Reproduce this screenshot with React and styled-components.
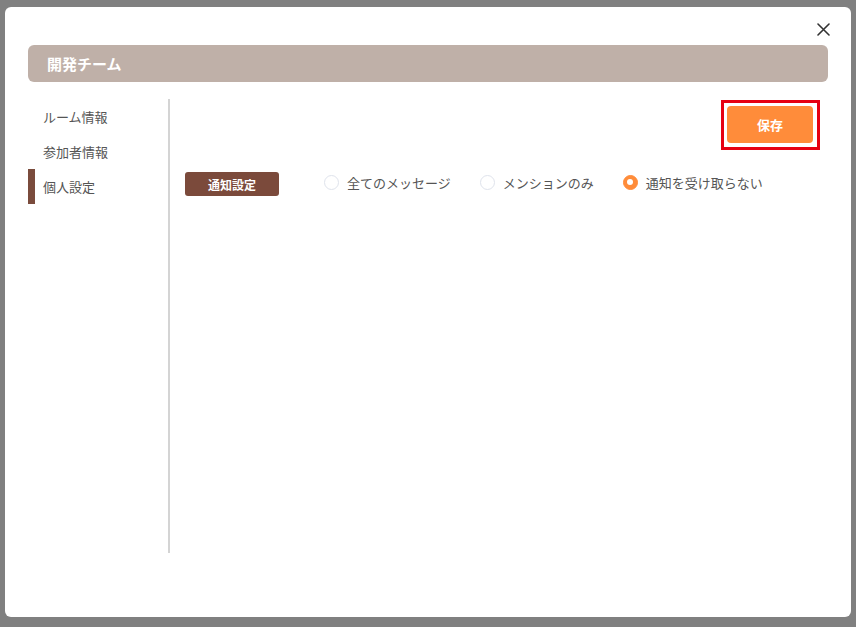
import React, { useState } from "react";
import styled, { createGlobalStyle } from "styled-components";

const GlobalStyle = createGlobalStyle`
  html, body {
    margin: 0;
    padding: 0;
    background: #808080;
    font-family: "Noto Sans CJK JP", "Noto Sans", sans-serif;
  }
  * { box-sizing: border-box; }
`;

const Overlay = styled.div`
  width: 856px;
  height: 627px;
  padding: 7px 5px 10px 5px;
  background: #808080;
`;

const Modal = styled.div`
  width: 846px;
  height: 610px;
  background: #ffffff;
  border-radius: 6px;
  padding: 0 23px;
  display: flex;
  flex-direction: column;
`;

const TopBar = styled.div`
  height: 38px;
  padding-top: 6px;
  display: flex;
  justify-content: flex-end;
  align-items: center;
`;

const CloseButton = styled.button`
  border: none;
  background: transparent;
  padding: 0;
  margin-right: -2px;
  width: 14px;
  height: 14px;
  display: flex;
  align-items: center;
  justify-content: center;
  cursor: pointer;
`;

const Header = styled.div`
  height: 37px;
  border-radius: 6px;
  background: #bfb0a8;
  color: #ffffff;
  font-weight: 700;
  font-size: 15px;
  display: flex;
  align-items: center;
  padding-left: 19px;
`;

const Body = styled.div`
  display: flex;
  flex: 1;
`;

const Sidebar = styled.nav`
  width: 142px;
  margin-top: 17px;
  height: 454px;
  border-right: 2px solid #d4d4d4;
  display: flex;
  flex-direction: column;
`;

const NavItem = styled.div`
  height: 35px;
  display: flex;
  align-items: center;
  font-size: 13px;
  color: #555555;
  padding-left: ${(p) => (p.$active ? "8px" : "15px")};
  border-left: ${(p) => (p.$active ? "7px solid #7a4b3c" : "none")};
  cursor: pointer;
`;

const Content = styled.div`
  flex: 1;
  padding: 18px 8px 0 15px;
  display: flex;
  flex-direction: column;
`;

const ActionRow = styled.div`
  display: flex;
  justify-content: flex-end;
`;

const Highlight = styled.div`
  border: 3px solid #e60012;
  padding: 3px 4px 4px 3px;
`;

const SaveButton = styled.button`
  width: 86px;
  height: 37px;
  border: none;
  border-radius: 4px;
  background: #ff8c3a;
  color: #ffffff;
  font-family: inherit;
  font-weight: 700;
  font-size: 13px;
  cursor: pointer;
`;

const SettingRow = styled.div`
  display: flex;
  align-items: center;
  margin-top: 22px;
`;

const Badge = styled.div`
  width: 94px;
  height: 24px;
  border-radius: 3px;
  background: #7b4a3b;
  color: #ffffff;
  font-size: 12px;
  font-weight: 700;
  display: flex;
  align-items: center;
  justify-content: center;
  margin-right: 45px;
`;

const RadioGroup = styled.div`
  display: flex;
  align-items: center;
  margin-top: -4px;
`;

const RadioLabel = styled.label`
  display: flex;
  align-items: center;
  margin-right: 29px;
  cursor: pointer;
`;

const RadioCircle = styled.span`
  width: 15px;
  height: 15px;
  border-radius: 50%;
  border: 1.5px solid ${(p) => (p.$checked ? "#ff8c3a" : "#dfe3ec")};
  background: ${(p) => (p.$checked ? "#ff8c3a" : "#ffffff")};
  display: flex;
  align-items: center;
  justify-content: center;
  &::after {
    content: "";
    width: 6px;
    height: 6px;
    border-radius: 50%;
    background: #ffffff;
    display: ${(p) => (p.$checked ? "block" : "none")};
  }
`;

const RadioText = styled.span`
  margin-left: 8px;
  font-size: 13px;
  color: #555555;
`;

const navItems = ["ルーム情報", "参加者情報", "個人設定"];
const options = ["全てのメッセージ", "メンションのみ", "通知を受け取らない"];

export default function App() {
  const [selected, setSelected] = useState(2);
  return (
    <>
      <GlobalStyle />
      <Overlay>
        <Modal>
          <TopBar>
            <CloseButton aria-label="close">
              <svg width="13" height="13" viewBox="0 0 13 13">
                <path d="M1 1L12 12M12 1L1 12" stroke="#333" strokeWidth="1.6" strokeLinecap="round" />
              </svg>
            </CloseButton>
          </TopBar>
          <Header>開発チーム</Header>
          <Body>
            <Sidebar>
              {navItems.map((n, i) => (
                <NavItem key={n} $active={i === 2}>
                  {n}
                </NavItem>
              ))}
            </Sidebar>
            <Content>
              <ActionRow>
                <Highlight>
                  <SaveButton>保存</SaveButton>
                </Highlight>
              </ActionRow>
              <SettingRow>
                <Badge>通知設定</Badge>
                <RadioGroup>
                  {options.map((o, i) => (
                    <RadioLabel key={o} onClick={() => setSelected(i)}>
                      <RadioCircle $checked={selected === i} />
                      <RadioText>{o}</RadioText>
                    </RadioLabel>
                  ))}
                </RadioGroup>
              </SettingRow>
            </Content>
          </Body>
        </Modal>
      </Overlay>
    </>
  );
}
